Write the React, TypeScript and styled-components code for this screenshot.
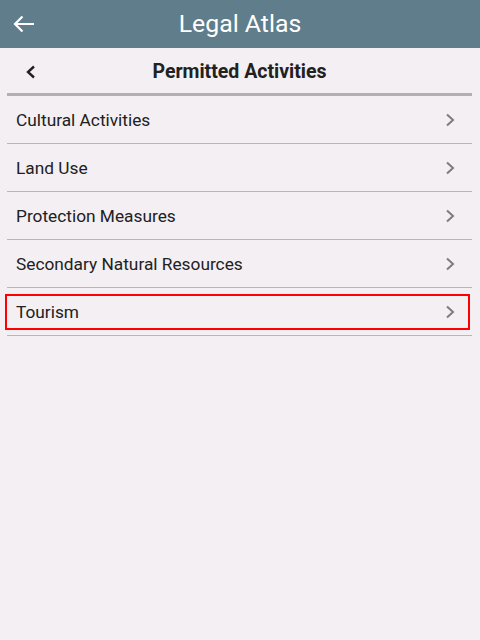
import styled, { createGlobalStyle } from 'styled-components';

const GlobalStyle = createGlobalStyle`
  html, body {
    margin: 0;
    padding: 0;
    background-color: #f3eff3;
    font-family: Roboto, 'Liberation Sans', sans-serif;
  }
`;

const Page = styled.div`
  width: 480px;
  height: 640px;
  background-color: #f3eff3;
  display: flex;
  flex-direction: column;
`;

const Toolbar = styled.div`
  height: 48px;
  background-color: #607d8b;
  display: flex;
  align-items: center;
  color: #ffffff;
`;

const IconButton = styled.div`
  width: 48px;
  height: 48px;
  display: flex;
  align-items: center;
  justify-content: center;
  flex-shrink: 0;
`;

const ToolbarTitle = styled.div`
  flex: 1;
  text-align: center;
  font-size: 24.8px;
  margin-right: 48px;
  line-height: 48px;
`;

const SubHeader = styled.div`
  height: 45px;
  margin: 0 8px 0 7px;
  display: flex;
  align-items: center;
  border-bottom: 3px solid #b4afb3;
`;

const SubBack = styled.div`
  width: 48px;
  height: 45px;
  display: flex;
  align-items: center;
  justify-content: center;
  flex-shrink: 0;
  padding-top: 2px;
  box-sizing: border-box;
`;

const SubTitle = styled.div`
  flex: 1;
  text-align: center;
  font-size: 19.5px;
  font-weight: 700;
  color: #212121;
  margin-right: 48px;
  padding-top: 2px;
`;

const List = styled.div`
  margin: 0 8px 0 7px;
  display: flex;
  flex-direction: column;
`;

const Row = styled.div<{ $focused?: boolean }>`
  height: 46px;
  border-bottom: 1px solid #b9b5b9;
  display: flex;
  align-items: center;
  padding: 1px 16px 0 9px;
  box-sizing: content-box;
  font-size: 17.3px;
  color: #212121;
  position: relative;

  ${(p) =>
    p.$focused &&
    `
    &::after {
      content: '';
      position: absolute;
      left: -2px;
      right: 2px;
      top: 6px;
      bottom: 5px;
      border: 2px solid #ff0000;
    }
  `}
`;

const Label = styled.span`
  flex: 1;
`;

const items = [
  'Cultural Activities',
  'Land Use',
  'Protection Measures',
  'Secondary Natural Resources',
  'Tourism',
];

const Chevron = () => (
  <svg width="12" height="14" viewBox="0 0 12 14">
    <polyline points="3,1.5 9,7 3,12.5" fill="none" stroke="#7d7b7d" strokeWidth="2" />
  </svg>
);

export default function App() {
  return (
    <Page>
      <GlobalStyle />
      <Toolbar>
        <IconButton>
          <svg width="24" height="24" viewBox="0 0 24 24">
            <path d="M22 12H3.5M10.5 4.5L3 12l7.5 7.5" fill="none" stroke="#ffffff" strokeWidth="2.2" />
          </svg>
        </IconButton>
        <ToolbarTitle>Legal Atlas</ToolbarTitle>
      </Toolbar>
      <SubHeader>
        <SubBack>
          <svg width="12" height="14" viewBox="0 0 12 14">
            <polyline points="9,1.5 3,7 9,12.5" fill="none" stroke="#212121" strokeWidth="2.4" />
          </svg>
        </SubBack>
        <SubTitle>Permitted Activities</SubTitle>
      </SubHeader>
      <List>
        {items.map((item, i) => (
          <Row key={item} $focused={i === items.length - 1}>
            <Label>{item}</Label>
            <Chevron />
          </Row>
        ))}
      </List>
    </Page>
  );
}
